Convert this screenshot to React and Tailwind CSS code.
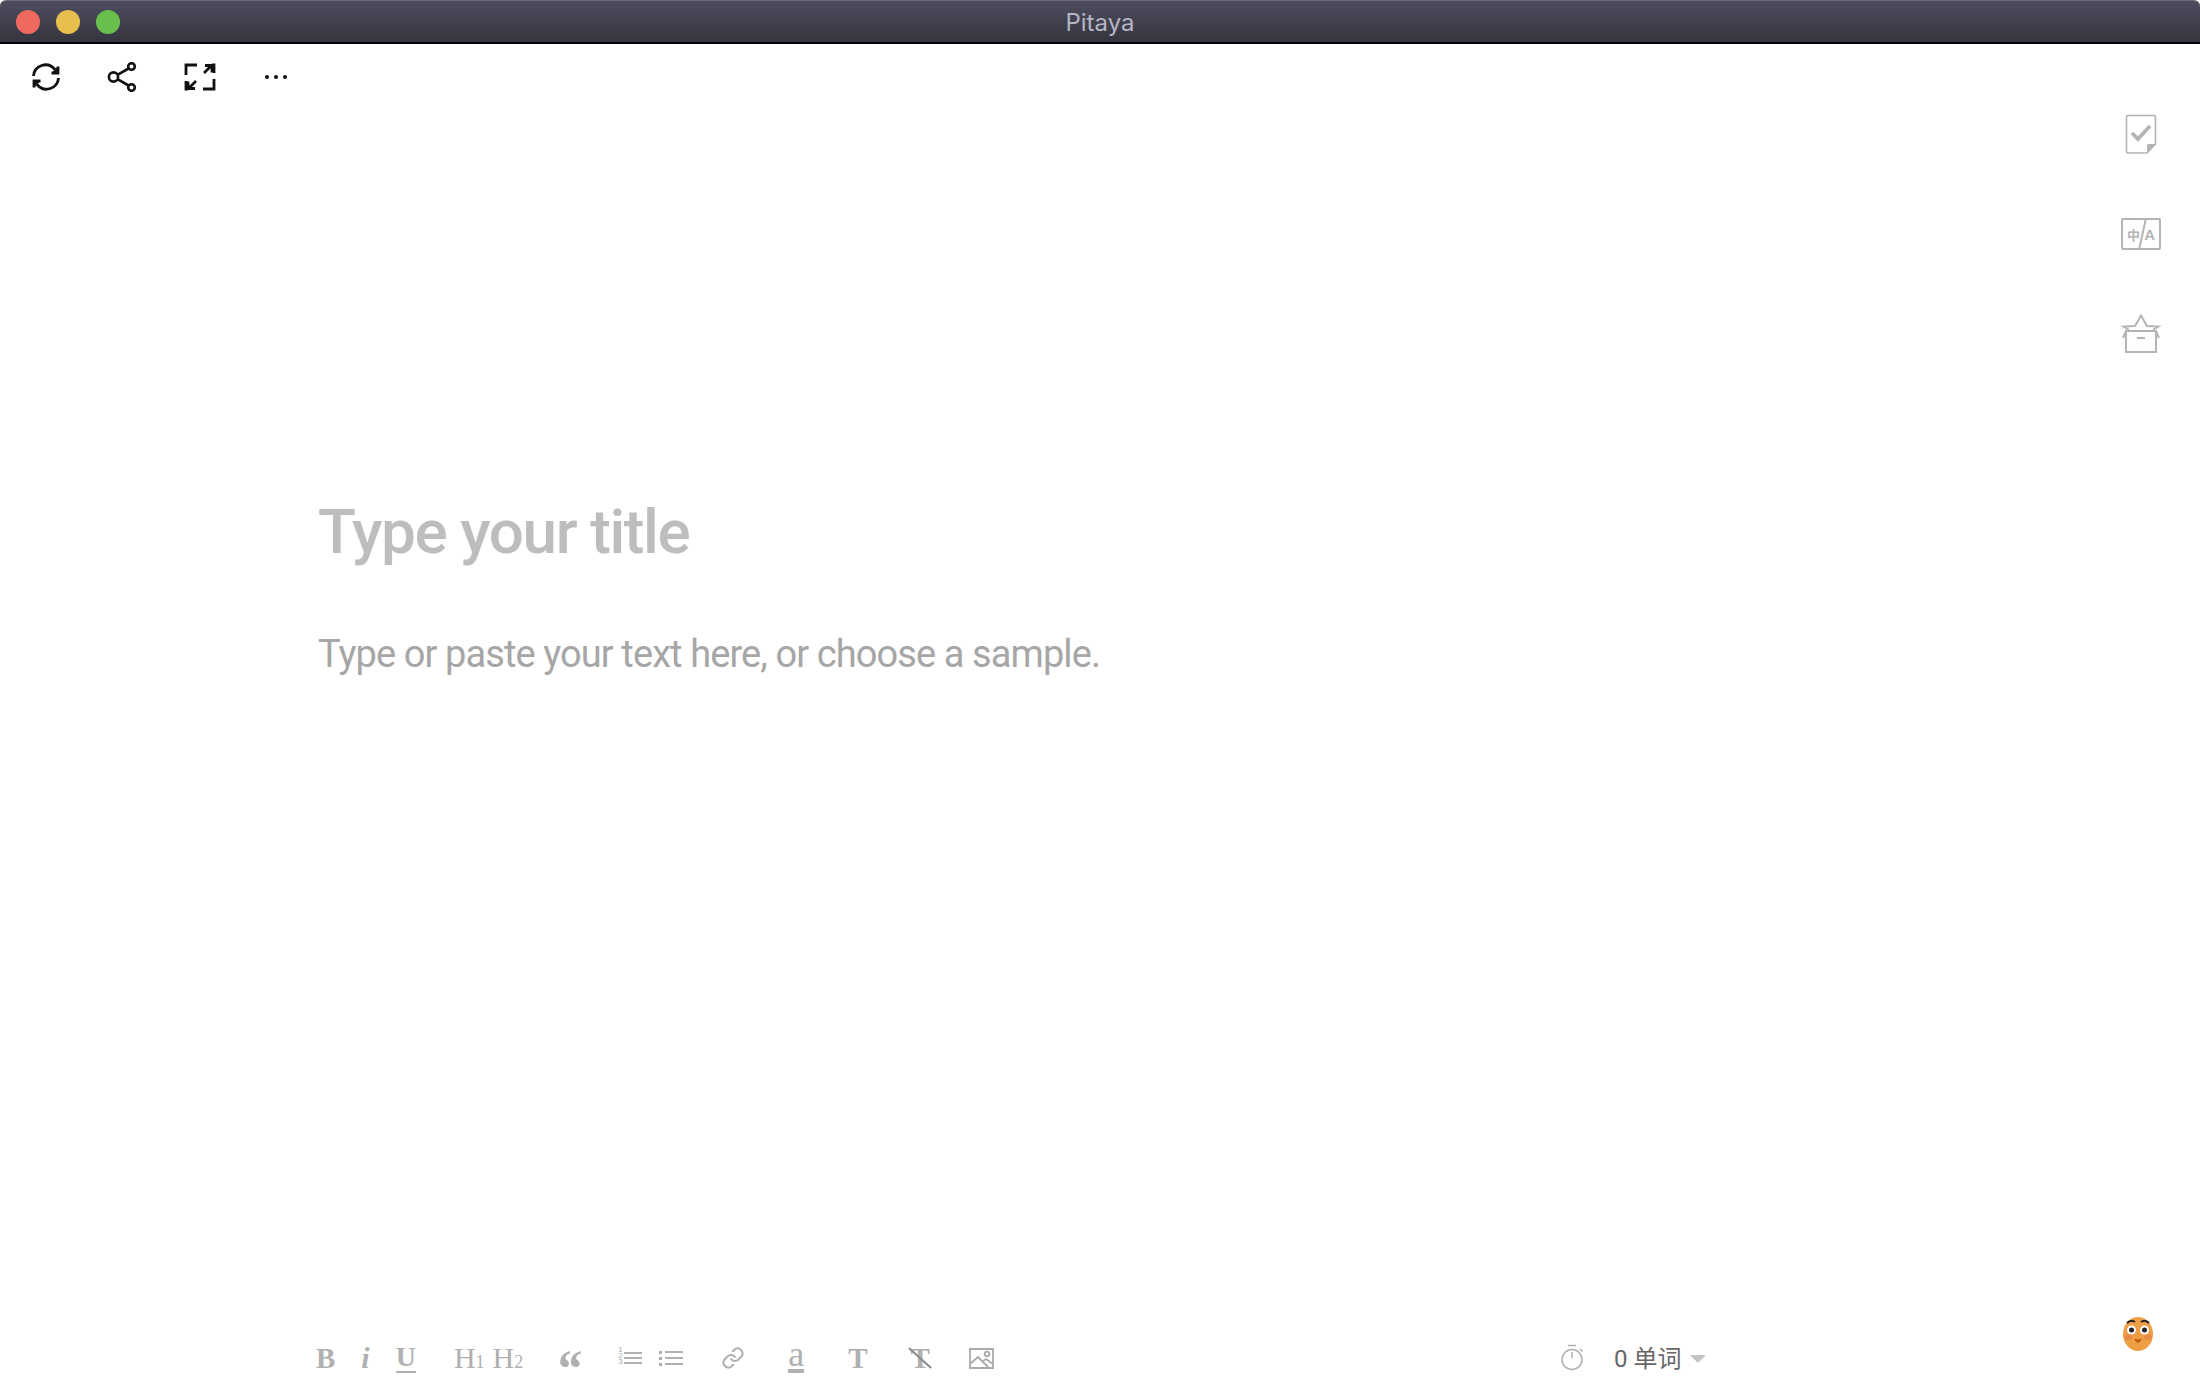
import React from 'react';

const serif = "font-['Liberation_Serif',serif]";

const RefreshIcon = () => (
    <svg width="30" height="30" viewBox="0 0 30 30" fill="none" stroke="#111" strokeWidth="2.800">
        <path d="M2.500 14a12 12 0 0 1 21-7l3 3" />
        <path d="M27 4.500v6.500h-6.500" strokeLinejoin="miter" fill="#111" />
        <path d="M27.500 16a12 12 0 0 1-21 7l-3-3" />
        <path d="M3 25.500v-6.500h6.500" strokeLinejoin="miter" fill="#111" />
    </svg>
);

const ShareIcon = () => (
    <svg width="30" height="30" viewBox="0 0 30 30" fill="none" stroke="#111" strokeWidth="2.600">
        <circle cx="6.500" cy="15" r="4.600" />
        <circle cx="24.500" cy="4.500" r="3.300" />
        <circle cx="24.500" cy="25.500" r="3.300" />
        <path d="M10.500 12.800L21.500 6.500M10.500 17.200L21.500 23.500" />
    </svg>
);

const ExpandIcon = () => (
    <svg width="32" height="28" viewBox="0 0 32 28" fill="none" stroke="#111" strokeWidth="2.800">
        <path d="M13 2H2v10M19 26h11V16M2 18v8h2M30 10V2h-2" />
        <path d="M20 10l7-7M21 2.500h7v7M12 18l-7 7M4 18.500v7h7" />
    </svg>
);

const CheckDocIcon = () => (
    <svg width="32" height="42" viewBox="0 0 32 42" fill="none" stroke="#b4b4b4" strokeWidth="1.600">
        <path d="M22 39H3a1.500 1.500 0 0 1-1.500-1.500V3A1.500 1.500 0 0 1 3 1.500h26A1.500 1.500 0 0 1 30.500 3v27z" />
        <path d="M22 39l8.500-9H24a2 2 0 0 0-2 2z" fill="#b4b4b4" stroke="none" />
        <path d="M7 19l6 6L25 12" strokeWidth="3.800" />
    </svg>
);

const TranslateIcon = () => (
    <div className="relative w-[40px] h-[32px] border-2 border-[#b4b4b4] rounded-[2px] flex items-center justify-between px-[4px] text-[#b4b4b4] text-[13px] font-bold leading-none font-['Noto_Sans_CJK_SC',sans-serif]">
        <span>中</span>
        <span className="font-['Liberation_Sans',sans-serif] text-[15px]">A</span>
        <svg className="absolute left-[13px] top-[-2px]" width="12" height="32" viewBox="0 0 12 32" stroke="#b4b4b4" strokeWidth="2">
            <path d="M10 0L3 32" />
        </svg>
    </div>
);

const BoxIcon = () => (
    <svg width="42" height="40" viewBox="0 0 42 40" fill="none" stroke="#b4b4b4" strokeWidth="2">
        <path d="M9 16L3.500 12.500 15 12 21 1.500l6 10.500 11.500.500L33 16" />
        <path d="M6 17h30v21H6z" />
        <path d="M6 17l-3 7M36 17l3 7" />
        <path d="M17 24h8" />
    </svg>
);

const OrderedList = () => (
    <div className="flex flex-col gap-[3px] w-[24px] relative pl-[6px]">
        <span className="h-[2px] bg-[#b0b0b0]" />
        <span className="h-[2px] bg-[#b0b0b0]" />
        <span className="h-[2px] bg-[#b0b0b0]" />
        <span className="absolute left-0 top-[-5px] text-[8px] leading-[6px] text-[#a8a8a8] font-['Liberation_Sans',sans-serif]">1<br />2<br />3</span>
    </div>
);

const BulletList = () => (
    <div className="flex flex-col gap-[3px] w-[24px]">
        {[0, 1, 2].map(i => (
            <div key={i} className="flex items-center gap-[3px] h-[3px]">
                <span className="w-[3px] h-[3px] bg-[#b0b0b0]" />
                <span className="flex-1 h-[2px] bg-[#b0b0b0]" />
            </div>
        ))}
    </div>
);

const LinkIcon = () => (
    <svg width="24" height="24" viewBox="0 0 24 24" fill="none" stroke="#b0b0b0" strokeWidth="2" strokeLinecap="round" strokeLinejoin="round">
        <path d="M10 13a5 5 0 0 0 7.500.500l3-3a5 5 0 0 0-7-7l-1.700 1.700" />
        <path d="M14 11a5 5 0 0 0-7.500-.500l-3 3a5 5 0 0 0 7 7l1.700-1.700" />
    </svg>
);

const ImageIcon = () => (
    <svg width="25" height="21" viewBox="0 0 25 21" fill="none" stroke="#aaa" strokeWidth="1.800">
        <path d="M1 1h23v19H1z" />
        <path d="M1 16l8-7 11 11M14 13l3-2 7 5" />
        <circle cx="18" cy="6" r="2.300" />
    </svg>
);

const TimerIcon = () => (
    <svg width="24" height="28" viewBox="0 0 24 28" fill="none" stroke="#b0b0b0" strokeWidth="1.500">
        <circle cx="12" cy="15.500" r="10" />
        <path d="M8 1.500h8M12 8v6M20 5l2.500 2.500" />
    </svg>
);

const Face = () => (
    <svg width="32" height="36" viewBox="0 0 32 36">
        <ellipse cx="16" cy="18" rx="15" ry="17" fill="#ee9f45" />
        <ellipse cx="6" cy="21" rx="4" ry="3" fill="#e98a45" />
        <ellipse cx="26" cy="21" rx="4" ry="3" fill="#e98a45" />
        <circle cx="9.500" cy="14" r="4.500" fill="#fff" />
        <circle cx="22.500" cy="14" r="4.500" fill="#fff" />
        <circle cx="9.500" cy="14" r="2.500" fill="#222" />
        <circle cx="22.500" cy="14" r="2.500" fill="#222" />
        <path d="M5 7q4-4 8-1M19 6q4-3 8 1" stroke="#222" strokeWidth="2" fill="none" />
        <path d="M13 23q3 6 6 0" stroke="#b8560f" strokeWidth="1.500" fill="#d9681a" />
    </svg>
);

const App = () => {
    return (
        <div className="w-[2200px] h-[1400px] flex flex-col bg-white overflow-hidden font-['Roboto',sans-serif]">
            <header className="relative h-[44px] shrink-0 flex items-center pl-[16px] gap-[16px] bg-gradient-to-b from-[#4d4d5f] to-[#35353f] border-t border-t-[#6a6a78] border-b-2 border-b-black rounded-t-[6px]">
                <span className="w-[24px] h-[24px] rounded-full bg-[#ee6a5f]" />
                <span className="w-[24px] h-[24px] rounded-full bg-[#e8bf4f]" />
                <span className="w-[24px] h-[24px] rounded-full bg-[#68bf4e]" />
                <span className="absolute left-0 right-0 top-[4px] text-center text-[24px] text-[#b5b5c5] font-['Inter',sans-serif]">Pitaya</span>
            </header>

            <div className="flex-1 flex min-h-0">
                <div className="flex-1 flex flex-col min-w-0">
                    <div className="h-[66px] flex items-center pl-[31px] shrink-0">
                        <RefreshIcon />
                        <div className="ml-[46px]"><ShareIcon /></div>
                        <div className="ml-[47px]"><ExpandIcon /></div>
                        <div className="ml-[49px] flex gap-[5px]">
                            <span className="w-[4px] h-[4px] rounded-full bg-[#111]" />
                            <span className="w-[4px] h-[4px] rounded-full bg-[#111]" />
                            <span className="w-[4px] h-[4px] rounded-full bg-[#111]" />
                        </div>
                    </div>

                    <main className="flex-1 pl-[318px] pt-[384px]">
                        <h1 className="text-[62px] leading-[76px] tracking-[-1.400px] font-medium text-[#bdbdbd]">Type your title</h1>
                        <p className="mt-[60px] text-[38px] leading-[48px] tracking-[-0.900px] text-[#a6a6a6]">Type or paste your text here, or choose a sample.</p>
                    </main>

                    <footer className="h-[84px] shrink-0 flex items-center pl-[316px] text-[#b0b0b0]">
                        <span className={`${serif} text-[29px] font-bold leading-none`}>B</span>
                        <span className={`${serif} text-[30px] font-bold italic leading-none ml-[26px]`}>i</span>
                        <span className={`${serif} text-[28px] font-bold leading-none ml-[26px] border-b-2 border-[#b0b0b0]`}>U</span>
                        <span className={`${serif} text-[30px] leading-none ml-[38px]`}>H<span className="text-[18px]">1</span></span>
                        <span className={`${serif} text-[30px] leading-none ml-[8px]`}>H<span className="text-[18px]">2</span></span>
                        <span className={`${serif} text-[52px] font-bold italic leading-none ml-[32px] h-[30px]`}>“</span>
                        <div className="ml-[37px]"><OrderedList /></div>
                        <div className="ml-[17px]"><BulletList /></div>
                        <div className="ml-[38px]"><LinkIcon /></div>
                        <span className={`${serif} text-[36px] leading-[22px] ml-[43px] border-b-4 border-[#b0b0b0] h-[30px]`}>a</span>
                        <span className={`${serif} text-[29px] font-bold leading-none ml-[44px]`}>T</span>
                        <span className={`${serif} relative text-[29px] font-bold leading-none ml-[43px]`}>
                            T
                            <span className="absolute left-[-6px] top-[13px] w-[30px] h-[2px] bg-[#8a8a8a] rotate-[42deg]" />
                        </span>
                        <div className="ml-[39px]"><ImageIcon /></div>

                        <div className="ml-[566px]"><TimerIcon /></div>
                        <span className="ml-[30px] mt-[2px] text-[24px] text-[#666] font-['Roboto','Noto_Sans_CJK_SC',sans-serif]">0 单词</span>
                        <span className="ml-[9px] mt-[2px] border-x-[8px] border-x-transparent border-t-[8px] border-t-[#c4c4c4]" />
                    </footer>
                </div>

                <aside className="w-[100px] shrink-0 flex flex-col items-center pr-[18px] pt-[70px] pb-[48px]">
                    <CheckDocIcon />
                    <div className="mt-[62px]"><TranslateIcon /></div>
                    <div className="mt-[64px]"><BoxIcon /></div>
                    <div className="mt-auto mr-[6px]"><Face /></div>
                </aside>
            </div>
        </div>
    );
};

export default App;
